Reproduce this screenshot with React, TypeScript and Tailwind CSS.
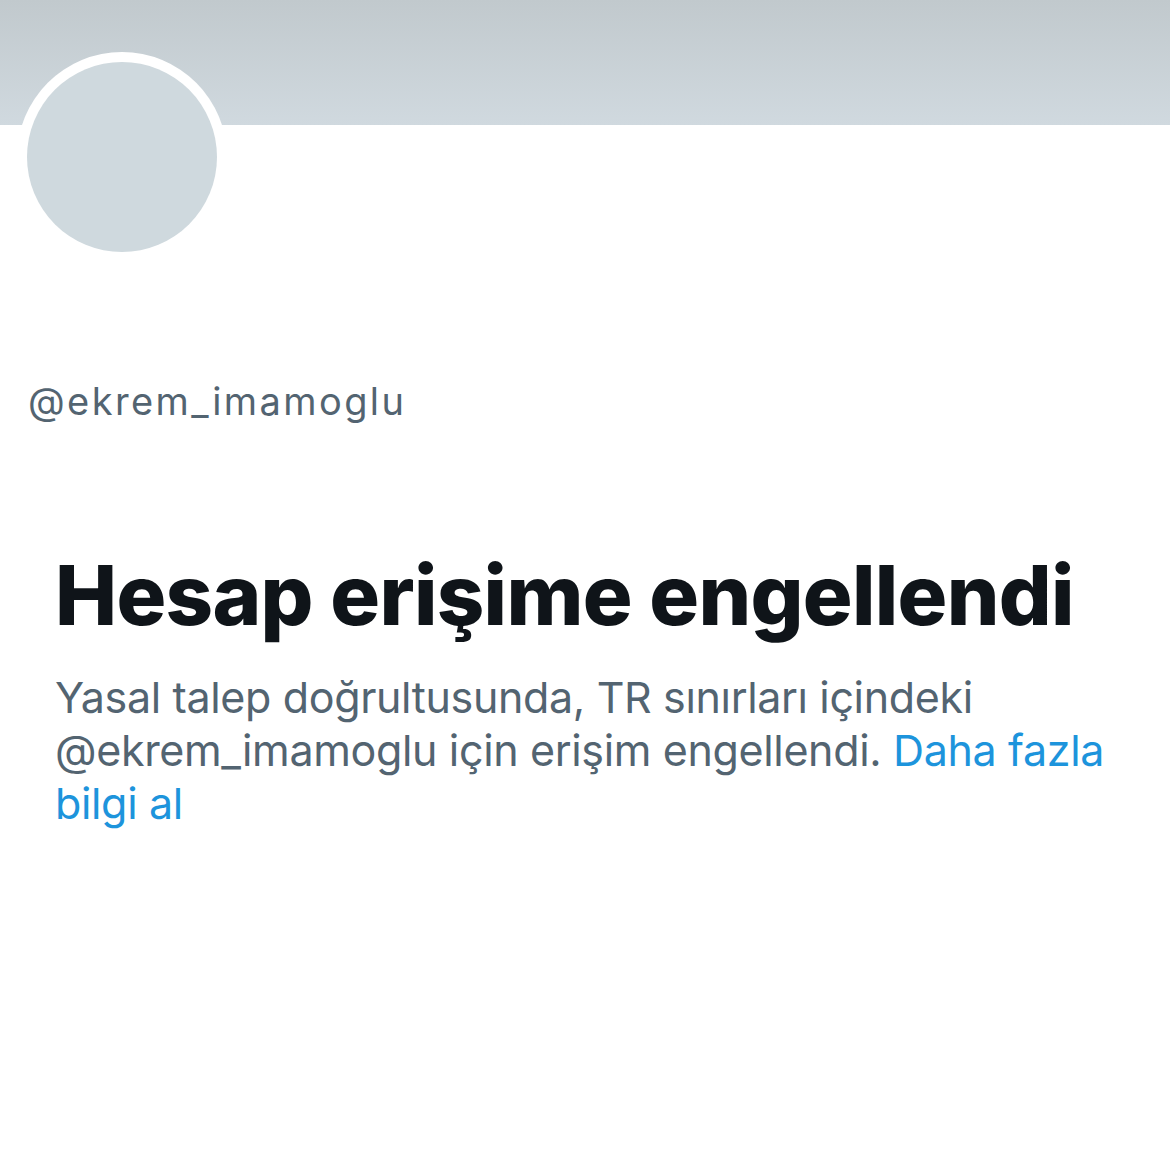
const App = () => {
  return (
    <div className="min-h-[1151px] w-[1170px] bg-white" style={{ fontFamily: "Inter, 'Noto Sans', sans-serif" }}>
      {/* banner */}
      <div className="h-[125px] bg-gradient-to-b from-[#c1c9cd] to-[#d0d9df]" />

      {/* avatar */}
      <div className="px-[17px] -mt-[73px]">
        <div className="w-[210px] h-[210px] rounded-full bg-white p-[10px]">
          <div className="w-full h-full rounded-full bg-[#cfd9de]" />
        </div>
      </div>

      <div className="px-[28px] mt-[115px]">
        <p className="text-[38px] leading-[48px] text-[#536471] tracking-[2.4px]">@ekrem_imamoglu</p>
      </div>

      <div className="px-[55px] mt-[122px]">
        <h1 className="text-[83px] leading-[96px] font-extrabold text-[#0f1419] tracking-[-0.7px]">
          Hesap erişime engellendi
        </h1>
        <p className="mt-[28px] text-[43px] leading-[53px] text-[#536471] tracking-[-0.35px]">
          Yasal talep doğrultusunda, TR sınırları içindeki
          <br />
          @ekrem_imamoglu için erişim engellendi.{" "}
          <a href="#" className="text-[#1d94dc]">
            Daha fazla
            <br />
            bilgi al
          </a>
        </p>
      </div>
    </div>
  );
};

export default App;
